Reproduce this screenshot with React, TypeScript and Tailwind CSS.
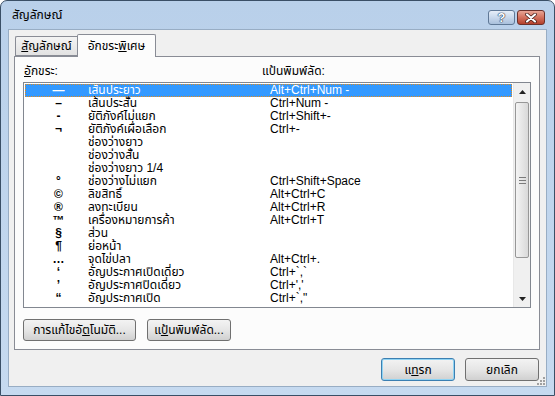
import React from 'react';

type Row = { sym: string; name: string; keys: string };

const rows: Row[] = [
  { sym: '—', name: 'เส้นประยาว', keys: 'Alt+Ctrl+Num -' },
  { sym: '–', name: 'เส้นประสั้น', keys: 'Ctrl+Num -' },
  { sym: '-', name: 'ยัติภังค์ไม่แยก', keys: 'Ctrl+Shift+-' },
  { sym: '¬', name: 'ยัติภังค์เผื่อเลือก', keys: 'Ctrl+-' },
  { sym: '', name: 'ช่องว่างยาว', keys: '' },
  { sym: '', name: 'ช่องว่างสั้น', keys: '' },
  { sym: '', name: 'ช่องว่างยาว 1/4', keys: '' },
  { sym: '°', name: 'ช่องว่างไม่แยก', keys: 'Ctrl+Shift+Space' },
  { sym: '©', name: 'ลิขสิทธิ์', keys: 'Alt+Ctrl+C' },
  { sym: '®', name: 'ลงทะเบียน', keys: 'Alt+Ctrl+R' },
  { sym: '™', name: 'เครื่องหมายการค้า', keys: 'Alt+Ctrl+T' },
  { sym: '§', name: 'ส่วน', keys: '' },
  { sym: '¶', name: 'ย่อหน้า', keys: '' },
  { sym: '…', name: 'จุดไข่ปลา', keys: 'Alt+Ctrl+.' },
  { sym: '‘', name: 'อัญประกาศเปิดเดี่ยว', keys: 'Ctrl+`,`' },
  { sym: '’', name: 'อัญประกาศปิดเดี่ยว', keys: "Ctrl+','" },
  { sym: '“', name: 'อัญประกาศเปิด', keys: 'Ctrl+`,"' },
];

const btn =
  'h-full rounded-[3px] border border-[#707070] bg-gradient-to-b from-[#f3f3f3] via-[#e6e6e6] to-[#d0d0d0] flex items-center justify-center text-[12px] text-black';

function ListRow({ row, selected }: { row: Row; selected: boolean }) {
  return (
    <div
      className={`h-[13px] flex items-center leading-[13px] ${
        selected ? 'bg-[#3399ff] text-white outline outline-1 outline-dotted outline-[#e08a1e] -outline-offset-1' : 'text-black'
      }`}
    >
      <span className="w-[63px] pl-[4px] text-center font-bold">{row.sym}</span>
      <span className="w-[182px]">{row.name}</span>
      <span>{row.keys}</span>
    </div>
  );
}

function Scrollbar() {
  return (
    <div className="w-[17px] h-full flex flex-col bg-[#f0f0f0] border-l border-[#e8e8e8]">
      <div className="h-[17px] flex items-center justify-center">
        <svg width="7" height="4" viewBox="0 0 7 4">
          <path d="M0 4 L3.5 0 L7 4 Z" fill="#222" />
        </svg>
      </div>
      <div className="h-[2px]" />
      <div className="h-[156px] mx-[1px] rounded-[2px] border border-[#979797] bg-gradient-to-r from-[#f4f4f4] to-[#d9d9d9] flex flex-col items-center justify-center gap-[2px]">
        <div className="w-[7px] h-px bg-[#7a7a7a]" />
        <div className="w-[7px] h-px bg-[#7a7a7a]" />
        <div className="w-[7px] h-px bg-[#7a7a7a]" />
      </div>
      <div className="flex-1" />
      <div className="h-[17px] flex items-center justify-center">
        <svg width="7" height="4" viewBox="0 0 7 4">
          <path d="M0 0 L3.5 4 L7 0 Z" fill="#222" />
        </svg>
      </div>
    </div>
  );
}

export default function App() {
  return (
    <div
      className="w-[555px] h-[396px] bg-gradient-to-b from-[#b9d0ea] to-[#c6daf0] border border-[#3a4f66] rounded-t-[7px] flex flex-col"
      style={{ fontFamily: '"Liberation Sans", "Noto Sans Thai", sans-serif' }}
    >
      {/* title bar */}
      <div className="h-[28px] flex items-start pl-[11px] pr-[9px]">
        <span className="mt-[7px] text-[12px] text-black leading-[15px]">สัญลักษณ์</span>
        <div className="ml-auto mt-[9px] flex gap-[2px]">
          <div className="w-[27px] h-[15px] rounded-[3px] border border-[#5f7896] bg-gradient-to-b from-[#e6eef8] via-[#c8d8ec] to-[#a9c0dc] flex items-center justify-center">
            <span className="text-[13px] font-bold leading-none text-white [text-shadow:0_0_1px_#1c2f4a,0_0_1px_#1c2f4a,0_0_1px_#1c2f4a]">?</span>
          </div>
          <div className="w-[28px] h-[15px] rounded-[3px] border border-[#6b302a] bg-gradient-to-b from-[#e8a595] via-[#d3705d] to-[#b4402c] flex items-center justify-center">
            <svg width="14" height="10" viewBox="0 0 14 10">
              <path d="M3 1.5 L11 8.5 M11 1.5 L3 8.5" stroke="#3a1410" strokeWidth="3.6" strokeLinecap="round" />
              <path d="M3 1.5 L11 8.5 M11 1.5 L3 8.5" stroke="#fff" strokeWidth="2.2" strokeLinecap="round" />
            </svg>
          </div>
        </div>
      </div>

      {/* client */}
      <div className="flex-1 mx-[7px] mb-[8px] bg-[#f0f0f0] border border-[#98adc4] flex flex-col pl-[5px] pt-[4px] relative">
        {/* tabs */}
        <div className="h-[22px] flex items-start">
          <div className="ml-[1px] mt-[2px] w-[62px] h-[20px] border border-r-0 border-[#898c95] rounded-tl-[2px] bg-gradient-to-b from-[#f3f3f3] to-[#e2e2e2] flex items-center justify-center text-[12px] text-black">
            <span><u>ส</u>ัญลักษณ์</span>
          </div>
          <div className="relative z-10 w-[79px] h-[23px] border border-b-0 border-[#898c95] rounded-t-[2px] bg-[#fcfcfc] flex items-center justify-center text-[12px] text-black pb-[1px]">
            <span>อักขระ<u>พิ</u>เศษ</span>
          </div>
        </div>

        {/* panel */}
        <div className="w-[526px] h-[294px] border border-[#898c95] bg-[#fcfcfc] px-[8px] flex flex-col">
          <div className="mt-[7px] h-[15px] flex items-center text-[12px] leading-[15px] text-black">
            <span className="w-[239px] pl-[1px]"><u>อั</u>กขระ:</span>
            <span>แป้นพิมพ์ลัด:</span>
          </div>
          <div className="mt-[3px] w-[508px] h-[226px] border border-[#828790] bg-white flex text-[12px]">
            <div className="flex-1 pt-[1px] pl-[1px] pr-[1px]">
              {rows.map((r, i) => (
                <ListRow key={i} row={r} selected={i === 0} />
              ))}
            </div>
            <Scrollbar />
          </div>
          <div className="mt-[11px] h-[22px] flex gap-[11px]">
            <div className={`w-[113px] ${btn}`}>
              <span>การแก้ไขอั<u>ต</u>โนมัติ...</span>
            </div>
            <div className={`w-[84px] ${btn}`}>
              <span>แ<u>ป้</u>นพิมพ์ลัด...</span>
            </div>
          </div>
        </div>

        {/* dialog buttons */}
        <div className="mt-[8px] h-[23px] flex justify-end gap-[10px] pr-[7px]">
          <div className={`w-[74px] ${btn} !border-[#3c7fb1] shadow-[inset_0_0_0_1px_#8fd3f3]`}>
            <span>แ<u>ท</u>รก</span>
          </div>
          <div className={`w-[74px] ${btn}`}>
            <span>ยกเลิก</span>
          </div>
        </div>

        {/* resize grip */}
        <svg className="absolute right-[1px] bottom-[1px]" width="10" height="10" viewBox="0 0 10 10">
          {[
            [8, 2],
            [8, 5],
            [5, 5],
            [8, 8],
            [5, 8],
            [2, 8],
          ].map(([x, y], i) => (
            <rect key={i} x={x} y={y} width="2" height="2" fill="#a0a0a0" />
          ))}
        </svg>
      </div>
    </div>
  );
}
